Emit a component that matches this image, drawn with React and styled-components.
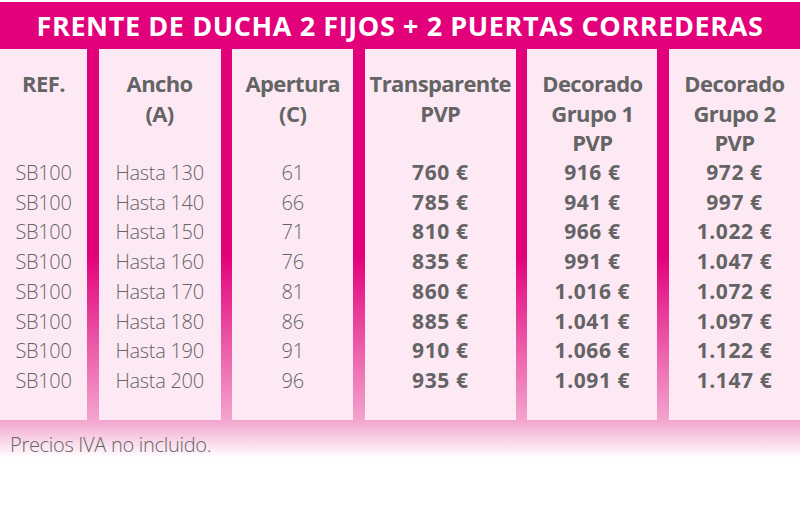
import React from 'react';
import styled, { createGlobalStyle } from 'styled-components';

const GlobalStyle = createGlobalStyle`
  html, body {
    margin: 0;
    padding: 0;
    background: #fff;
  }
  body {
    font-family: 'Open Sans', 'Noto Sans', sans-serif;
  }
`;

const columns = [
  {
    width: 87,
    head: ['REF.'],
    values: Array(8).fill('SB100'),
    bold: false,
  },
  {
    width: 122,
    head: ['Ancho', '(A)'],
    values: ['130', '140', '150', '160', '170', '180', '190', '200'].map((n) => `Hasta ${n}`),
    bold: false,
  },
  {
    width: 121,
    head: ['Apertura', '(C)'],
    values: ['61', '66', '71', '76', '81', '86', '91', '96'],
    bold: false,
  },
  {
    width: 151,
    head: ['Transparente', 'PVP'],
    values: ['760 €', '785 €', '810 €', '835 €', '860 €', '885 €', '910 €', '935 €'],
    bold: true,
  },
  {
    width: 130,
    head: ['Decorado', 'Grupo 1', 'PVP'],
    values: ['916 €', '941 €', '966 €', '991 €', '1.016 €', '1.041 €', '1.066 €', '1.091 €'],
    bold: true,
  },
  {
    width: 131,
    head: ['Decorado', 'Grupo 2', 'PVP'],
    values: ['972 €', '997 €', '1.022 €', '1.047 €', '1.072 €', '1.097 €', '1.122 €', '1.147 €'],
    bold: true,
  },
];

const App = () => {
  return (
    <>
      <GlobalStyle />
      <Page>
        <Title>FRENTE DE DUCHA 2 FIJOS + 2 PUERTAS CORREDERAS</Title>
        <Table $cols={columns.map((c) => `${c.width}px`).join(' ')}>
          {columns.map((col, i) => (
            <Panel key={i}>
              <Head>
                {col.head.map((line) => (
                  <HeadLine key={line}>{line}</HeadLine>
                ))}
              </Head>
              {col.values.map((v, j) => (
                <Cell key={j} $bold={col.bold}>{v}</Cell>
              ))}
            </Panel>
          ))}
        </Table>
        <Note>Precios IVA no incluido.</Note>
      </Page>
    </>
  );
};

const Page = styled.div`
  width: 800px;
  height: 515px;
  padding-top: 2px;
  box-sizing: border-box;
  background: linear-gradient(
    to bottom,
    #ffffff 0px,
    #ffffff 2px,
    #e3007b 2px,
    #e3007b 255px,
    #f3a4cd 420px,
    #f6bcdb 430px,
    #ffffff 458px
  );
  display: flex;
  flex-direction: column;
`;

const Title = styled.div`
  height: 47px;
  display: flex;
  align-items: center;
  justify-content: center;
  color: #fff;
  font-weight: 700;
  font-size: 27px;
  letter-spacing: 0.6px;
  white-space: nowrap;
`;

const Table = styled.div`
  display: grid;
  grid-template-columns: ${(p) => p.$cols};
  column-gap: 11.6px;
  height: 371px;
`;

const Panel = styled.div`
  background: #fde9f4;
  padding-top: 20px;
  display: flex;
  flex-direction: column;
  align-items: center;
  color: #646464;
`;

const Head = styled.div`
  height: 89px;
  display: flex;
  flex-direction: column;
  align-items: center;
`;

const HeadLine = styled.div`
  line-height: 29.7px;
  font-size: 22px;
  font-weight: 700;
  letter-spacing: -0.6px;
  white-space: nowrap;
`;

const Cell = styled.div`
  line-height: 29.7px;
  font-size: ${(p) => (p.$bold ? '21px' : '20px')};
  font-weight: ${(p) => (p.$bold ? 700 : 300)};
  letter-spacing: ${(p) => (p.$bold ? '0.6px' : '-0.3px')};
  white-space: nowrap;
`;

const Note = styled.div`
  padding: 11px 0 0 10px;
  font-size: 20px;
  font-weight: 300;
  color: #666;
  letter-spacing: -0.3px;
`;

export default App;
